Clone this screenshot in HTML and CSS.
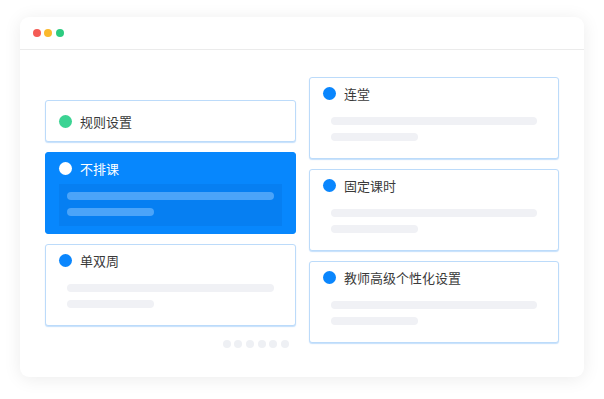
FILE: index.html
```html
<!DOCTYPE html>
<html lang="zh-CN">
<head>
  <meta charset="UTF-8" />
  <meta name="viewport" content="width=device-width, initial-scale=1.0"/>
  <title>排课规则</title>
  <link rel="stylesheet" href="styles.css">
</head>
<body>

  <div class="window">
    <div class="window-bar">
      <span class="light red"></span>
      <span class="light yellow"></span>
      <span class="light green"></span>
    </div>

    <div class="board">
      <!-- 左列 -->
      <div class="column left">
        <div class="card simple">
          <div class="card-head"><span class="dot green"></span>规则设置</div>
        </div>
        <div class="card active">
          <div class="card-head"><span class="dot"></span>不排课</div>
          <div class="card-panel">
            <div class="bar long"></div>
            <div class="bar short"></div>
          </div>
        </div>
        <div class="card">
          <div class="card-head"><span class="dot"></span>单双周</div>
          <div class="card-panel">
            <div class="bar long"></div>
            <div class="bar short"></div>
          </div>
        </div>
        <div class="pager">
          <span></span><span></span><span></span><span></span><span></span><span></span>
        </div>
      </div>

      <!-- 右列 -->
      <div class="column">
        <div class="card">
          <div class="card-head"><span class="dot"></span>连堂</div>
          <div class="card-panel">
            <div class="bar long"></div>
            <div class="bar short"></div>
          </div>
        </div>
        <div class="card">
          <div class="card-head"><span class="dot"></span>固定课时</div>
          <div class="card-panel">
            <div class="bar long"></div>
            <div class="bar short"></div>
          </div>
        </div>
        <div class="card">
          <div class="card-head"><span class="dot"></span>教师高级个性化设置</div>
          <div class="card-panel">
            <div class="bar long"></div>
            <div class="bar short"></div>
          </div>
        </div>
      </div>
    </div>
  </div>

</body>
</html>
```

FILE: styles.css
```css
body {
  margin: 0;
  padding: 17px 20px 22px;
  background: #fff;
  font-family: "Noto Sans CJK SC", "Noto Sans", sans-serif;
  color: #3a3a3a;
}

/* 窗口 */
.window {
  width: 564px;
  height: 360px;
  box-sizing: border-box;
  background: #fff;
  border-radius: 9px;
  box-shadow: 0 2px 18px rgba(0,0,0,0.08);
  overflow: hidden;
}

.window-bar {
  height: 32px;
  border-bottom: 1px solid #ebebeb;
  display: flex;
  align-items: center;
  gap: 3.7px;
  padding-left: 12.7px;
}

.light {
  width: 8px;
  height: 8px;
  border-radius: 50%;
}

.light.red { background: #f45b55; }
.light.yellow { background: #fbb92c; }
.light.green { background: #2ccb80; }

.board {
  display: grid;
  grid-template-columns: 251px 250px;
  column-gap: 13px;
  padding: 27px 0 0 25px;
}

.column {
  display: flex;
  flex-direction: column;
  gap: 10px;
}

.column.left {
  padding-top: 23px;
}

/* 卡片 */
.card {
  height: 82px;
  box-sizing: border-box;
  border: 1px solid #bcdbfa;
  border-radius: 3px;
  background: #fff;
  box-shadow: 0 1px 1px rgba(90,165,245,0.35);
  display: flex;
  flex-direction: column;
}

.card.simple {
  height: 42px;
}

.card-head {
  height: 31px;
  flex-shrink: 0;
  display: flex;
  align-items: center;
  padding-left: 13px;
  font-size: 13px;
  line-height: 1;
}

.card.simple .card-head {
  height: 100%;
}

.dot {
  width: 13px;
  height: 13px;
  border-radius: 50%;
  background: #0a86fd;
  margin-right: 8px;
}

.dot.green {
  background: #3bd393;
}

.card-panel {
  height: 42px;
  box-sizing: border-box;
  margin: 0 13px;
  padding: 8px;
  display: flex;
  flex-direction: column;
  gap: 8px;
}

.bar {
  height: 8px;
  border-radius: 4px;
  background: #f0f1f5;
}

.bar.short {
  width: 87px;
}

.card.active {
  background: #0787fd;
  border-color: #0787fd;
  box-shadow: none;
  color: #fff;
}

.card.active .dot {
  background: #fff;
}

.card.active .card-panel {
  background: #067ff2;
}

.card.active .bar {
  background: #4ba4f9;
}

.pager {
  display: flex;
  justify-content: flex-end;
  gap: 3.7px;
  padding: 4px 7px 0 0;
}

.pager span {
  width: 8px;
  height: 8px;
  border-radius: 50%;
  background: #eef0f4;
}
```
